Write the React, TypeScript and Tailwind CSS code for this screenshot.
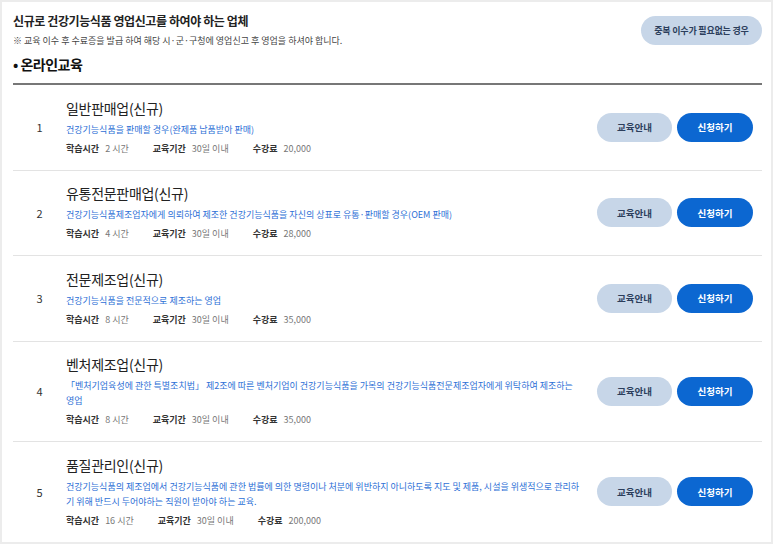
import React from "react";

type Course = {
  no: number;
  title: string;
  desc: string;
  hours: string;
  period: string;
  fee: string;
};

const courses: Course[] = [
  {
    no: 1,
    title: "일반판매업(신규)",
    desc: "건강기능식품을 판매할 경우(완제품 납품받아 판매)",
    hours: "2 시간",
    period: "30일 이내",
    fee: "20,000",
  },
  {
    no: 2,
    title: "유통전문판매업(신규)",
    desc: "건강기능식품제조업자에게 의뢰하여 제조한 건강기능식품을 자신의 상표로 유통·판매할 경우(OEM 판매)",
    hours: "4 시간",
    period: "30일 이내",
    fee: "28,000",
  },
  {
    no: 3,
    title: "전문제조업(신규)",
    desc: "건강기능식품을 전문적으로 제조하는 영업",
    hours: "8 시간",
    period: "30일 이내",
    fee: "35,000",
  },
  {
    no: 4,
    title: "벤처제조업(신규)",
    desc: "「벤처기업육성에 관한 특별조치법」 제2조에 따른 벤처기업이 건강기능식품을 가목의 건강기능식품전문제조업자에게 위탁하여 제조하는 영업",
    hours: "8 시간",
    period: "30일 이내",
    fee: "35,000",
  },
  {
    no: 5,
    title: "품질관리인(신규)",
    desc: "건강기능식품의 제조업에서 건강기능식품에 관한 법률에 의한 명령이나 처분에 위반하지 아니하도록 지도 및 제품, 시설을 위생적으로 관리하기 위해 반드시 두어야하는 직원이 받아야 하는 교육.",
    hours: "16 시간",
    period: "30일 이내",
    fee: "200,000",
  },
];

function Meta({ label, value }: { label: string; value: string }) {
  return (
    <div className="flex items-center gap-[6px]">
      <span className="font-bold text-[#333]">{label}</span>
      <span className="text-[#777]">{value}</span>
    </div>
  );
}

export default function App() {
  return (
    <div
      className="w-[773px] h-[544px] overflow-hidden bg-white border-2 border-[#ececec] pl-[11px] pr-[9px]"
      style={{ fontFamily: '"Noto Sans CJK KR", "Noto Sans", sans-serif' }}
    >
      <div className="flex justify-between items-start pt-[10px]">
        <div>
          <h1 className="text-[12px] leading-[18px] font-bold text-[#222] tracking-[-0.4px]">
            신규로 건강기능식품 영업신고를 하여야 하는 업체
          </h1>
          <p className="mt-[4px] text-[9px] leading-[14px] text-[#444]">
            ※ 교육 이수 후 수료증을 발급 하여 해당 시·군·구청에 영업신고 후 영업을 하셔야 합니다.
          </p>
        </div>
        <button className="mt-[4px] w-[121px] h-[29px] rounded-full bg-[#c7d6e8] text-[9px] font-bold text-[#2c3e5c] tracking-[-0.2px]">
          중복 이수가 필요없는 경우
        </button>
      </div>

      <h2 className="mt-[6px] text-[14px] leading-[20px] font-bold text-[#111] tracking-[-0.5px]">
        • 온라인교육
      </h2>

      <div className="mt-[9px] border-t-2 border-[#777]">
        {courses.map((c) => (
          <div
            key={c.no}
            className="flex items-center border-b border-[#e3e3e3] py-[12.75px]"
          >
            <div className="w-[53px] shrink-0 text-center text-[11px] text-[#333]">
              {c.no}
            </div>
            <div className="flex-1 min-w-0 pr-[15px]">
              <div className="text-[14px] leading-[20px] text-[#222] tracking-[-0.3px]">
                {c.title}
              </div>
              <div className="mt-[4px] text-[9px] leading-[15px] text-[#2d6fd6]">
                {c.desc}
              </div>
              <div className="mt-[4px] flex items-center gap-[24px] text-[9px] leading-[16px]">
                <Meta label="학습시간" value={c.hours} />
                <Meta label="교육기간" value={c.period} />
                <Meta label="수강료" value={c.fee} />
              </div>
            </div>
            <div className="flex shrink-0 gap-[5px] mr-[9px]">
              <button className="w-[75px] h-[29px] rounded-full bg-[#c7d6e8] text-[9.5px] font-bold text-[#2c3e5c]">
                교육안내
              </button>
              <button className="w-[76px] h-[29px] rounded-full bg-[#0c67d1] text-[9.5px] font-bold text-white">
                신청하기
              </button>
            </div>
          </div>
        ))}
      </div>
    </div>
  );
}
